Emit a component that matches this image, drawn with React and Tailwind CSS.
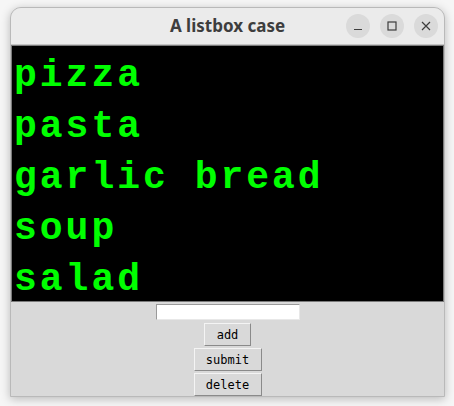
import React from 'react';

const items = ['pizza', 'pasta', 'garlic bread', 'soup', 'salad'];

const TkButton = ({ label, wide }) => (
  <button
    className={`h-[23px] ${wide ? 'w-[68px]' : 'w-[47px]'} bg-[#d9d9d9] border border-t-[#f4f4f4] border-l-[#f4f4f4] border-r-[#8a8a8a] border-b-[#8a8a8a] text-[12px] leading-none text-black`}
    style={{ fontFamily: '"DejaVu Sans Mono", "Liberation Mono", monospace' }}
  >
    {label}
  </button>
);

const App = () => {
  return (
    <div className="w-[454px] h-[406px] bg-[#f6f6f6] pt-[7px] pl-[10px]">
      <div className="w-[435px] h-[390px] flex flex-col rounded-t-[11px] border border-[#b9b9b9] bg-[#d9d9d9] shadow-[0_2px_10px_rgba(0,0,0,0.25)] overflow-hidden">
        {/* Title bar */}
        <div className="relative h-[37px] shrink-0 bg-[#ebebeb] border-b border-[#c4c4c4] flex items-center justify-center">
          <span
            className="text-[17px] font-bold text-[#3d3d3d]"
            style={{ fontFamily: '"Noto Sans", "Open Sans", sans-serif' }}
          >
            A listbox case
          </span>
          <div className="absolute right-[6px] top-[6px] flex gap-[10px]">
            <div className="w-[24px] h-[24px] rounded-full bg-[#dadada] flex items-center justify-center">
              <svg width="10" height="10" viewBox="0 0 10 10">
                <path d="M1 8.5h8" stroke="#3d3d3d" strokeWidth="1.2" />
              </svg>
            </div>
            <div className="w-[24px] h-[24px] rounded-full bg-[#dadada] flex items-center justify-center">
              <svg width="10" height="10" viewBox="0 0 10 10">
                <rect x="1" y="1" width="8" height="8" fill="none" stroke="#3d3d3d" strokeWidth="1.2" />
              </svg>
            </div>
            <div className="w-[24px] h-[24px] rounded-full bg-[#dadada] flex items-center justify-center">
              <svg width="10" height="10" viewBox="0 0 10 10">
                <path d="M1 1l8 8M9 1l-8 8" stroke="#3d3d3d" strokeWidth="1.2" />
              </svg>
            </div>
          </div>
        </div>

        {/* Listbox */}
        <div className="h-[257px] shrink-0 bg-black border border-[#7a7a7a] pt-[4px] pl-[2px] overflow-hidden">
          {items.map((it) => (
            <div
              key={it}
              className="text-[38px] leading-[51px] font-bold text-[#00ff00] tracking-[3px] whitespace-pre"
              style={{ fontFamily: '"Liberation Mono", "DejaVu Sans Mono", monospace' }}
            >
              {it}
            </div>
          ))}
        </div>

        {/* Controls */}
        <div className="flex flex-col items-center pt-[2px] gap-[2px]">
          <input
            type="text"
            className="w-[144px] h-[16px] bg-white border border-t-[#9a9a9a] border-l-[#9a9a9a] border-r-[#e8e8e8] border-b-[#e8e8e8] mb-[1px] outline-none"
          />
          <TkButton label="add" />
          <TkButton label="submit" wide />
          <TkButton label="delete" wide />
        </div>
      </div>
    </div>
  );
};

export default App;
